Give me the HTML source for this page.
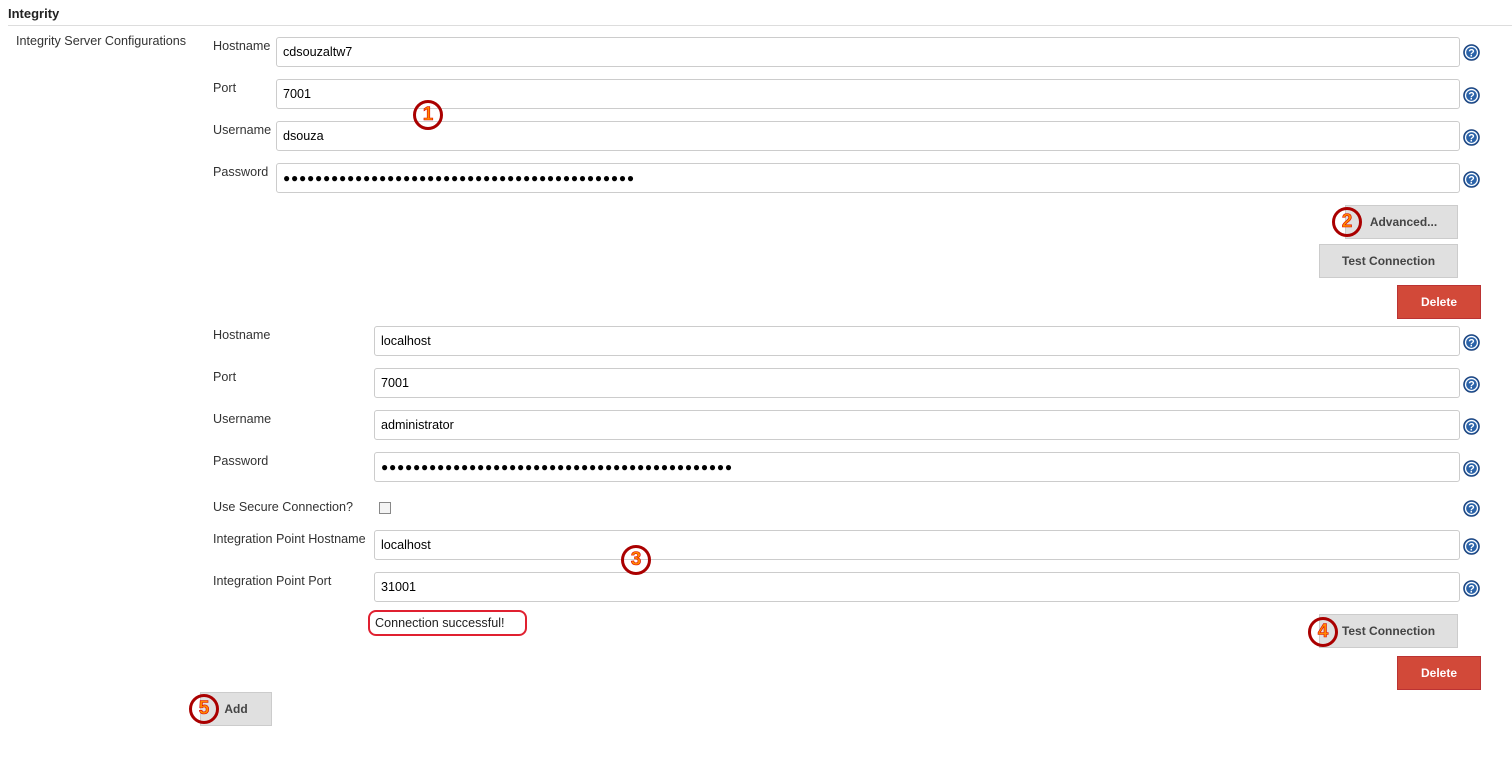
<!DOCTYPE html><html><head><style>
body{margin:0;width:1512px;height:767px;background:#fff;font-family:"Liberation Sans",Arial,sans-serif;font-size:12.6px;color:#333;position:relative;overflow:hidden}
.a{position:absolute}
.lbl{position:absolute;left:213px;font-size:12.6px;color:#333}
.in{position:absolute;border:1px solid #ccc;border-radius:3px;right:52px;box-sizing:border-box;height:30px;padding-left:6px;line-height:28px;font-size:12.6px;color:#000;background:#fff}
.h{position:absolute;left:1463px;width:17px;height:17px}
.btn{position:absolute;background:#e0e0e0;border:1px solid #ccc;box-sizing:border-box;font-weight:bold;font-size:12px;color:#444;text-align:center}
.del{position:absolute;background:#d24939;border:1px solid #b33;box-sizing:border-box;color:#fff;font-weight:bold;font-size:12px;text-align:center;left:1397px;width:84px;height:34px;line-height:32px}
.c{position:absolute;width:30px;height:30px;border:3px solid #a00;border-radius:50%;box-sizing:border-box;color:#f80;font-weight:bold;font-size:19px;text-align:center;line-height:24px;-webkit-text-stroke:.6px #d00}
.dots{letter-spacing:0.75px;font-size:12px}
</style></head><body>
<div class="a" style="left:8px;top:6px;font-weight:bold;font-size:13px;color:#222">Integrity</div>
<div class="a" style="left:8px;top:25px;right:0;height:1px;background:#ddd"></div>
<div class="a" style="left:16px;top:34px">Integrity Server Configurations</div>
<svg width="0" height="0" style="position:absolute"><defs><symbol id="q" viewBox="0 0 16 16"><circle cx="8" cy="8" r="7.3" fill="#2a62a8" stroke="#1a3f78"/><circle cx="8" cy="8" r="5.6" fill="none" stroke="#fff" stroke-width="1.2"/><text x="8" y="11.8" font-size="10" font-weight="bold" text-anchor="middle" fill="#fff" font-family="Liberation Sans">?</text></symbol></defs></svg>

<div class="lbl" style="top:39px">Hostname</div><div class="in" style="left:276px;top:37px">cdsouzaltw7</div>
<div class="lbl" style="top:81px">Port</div><div class="in" style="left:276px;top:79px">7001</div>
<div class="lbl" style="top:123px">Username</div><div class="in" style="left:276px;top:121px">dsouza</div>
<div class="lbl" style="top:165px">Password</div><div class="in dots" style="left:276px;top:163px">●●●●●●●●●●●●●●●●●●●●●●●●●●●●●●●●●●●●●●●●●●●●</div>
<svg class="h" style="top:44px"><use href="#q"/></svg>
<svg class="h" style="top:87px"><use href="#q"/></svg>
<svg class="h" style="top:129px"><use href="#q"/></svg>
<svg class="h" style="top:171px"><use href="#q"/></svg>
<div class="btn" style="left:1345px;top:205px;width:113px;height:34px;line-height:32px;padding-left:4px">Advanced...</div>
<div class="btn" style="left:1319px;top:244px;width:139px;height:34px;line-height:32px">Test Connection</div>
<div class="del" style="top:285px">Delete</div>

<div class="lbl" style="top:328px">Hostname</div><div class="in" style="left:374px;top:326px">localhost</div>
<div class="lbl" style="top:370px">Port</div><div class="in" style="left:374px;top:368px">7001</div>
<div class="lbl" style="top:412px">Username</div><div class="in" style="left:374px;top:410px">administrator</div>
<div class="lbl" style="top:454px">Password</div><div class="in dots" style="left:374px;top:452px">●●●●●●●●●●●●●●●●●●●●●●●●●●●●●●●●●●●●●●●●●●●●</div>
<div class="lbl" style="top:500px">Use Secure Connection?</div>
<div class="a" style="left:379px;top:502px;width:12px;height:12px;border:1px solid #888;box-sizing:border-box;background:#f4f4f4"></div>
<div class="lbl" style="top:532px">Integration Point Hostname</div><div class="in" style="left:374px;top:530px">localhost</div>
<div class="lbl" style="top:574px">Integration Point Port</div><div class="in" style="left:374px;top:572px">31001</div>
<svg class="h" style="top:334px"><use href="#q"/></svg>
<svg class="h" style="top:376px"><use href="#q"/></svg>
<svg class="h" style="top:418px"><use href="#q"/></svg>
<svg class="h" style="top:460px"><use href="#q"/></svg>
<svg class="h" style="top:500px"><use href="#q"/></svg>
<svg class="h" style="top:538px"><use href="#q"/></svg>
<svg class="h" style="top:580px"><use href="#q"/></svg>
<div class="a" style="left:368px;top:610px;width:159px;height:26px;border:2px solid #e02030;border-radius:8px;box-sizing:border-box;padding-left:5px;line-height:22px;font-size:12.6px;color:#222">Connection successful!</div>
<div class="btn" style="left:1319px;top:614px;width:139px;height:34px;line-height:32px">Test Connection</div>
<div class="del" style="top:656px">Delete</div>
<div class="btn" style="left:200px;top:692px;width:72px;height:34px;line-height:32px">Add</div>

<div class="c" style="left:413px;top:100px">1</div>
<div class="c" style="left:1332px;top:207px">2</div>
<div class="c" style="left:621px;top:545px">3</div>
<div class="c" style="left:1308px;top:617px">4</div>
<div class="c" style="left:189px;top:694px">5</div>
</body></html>
